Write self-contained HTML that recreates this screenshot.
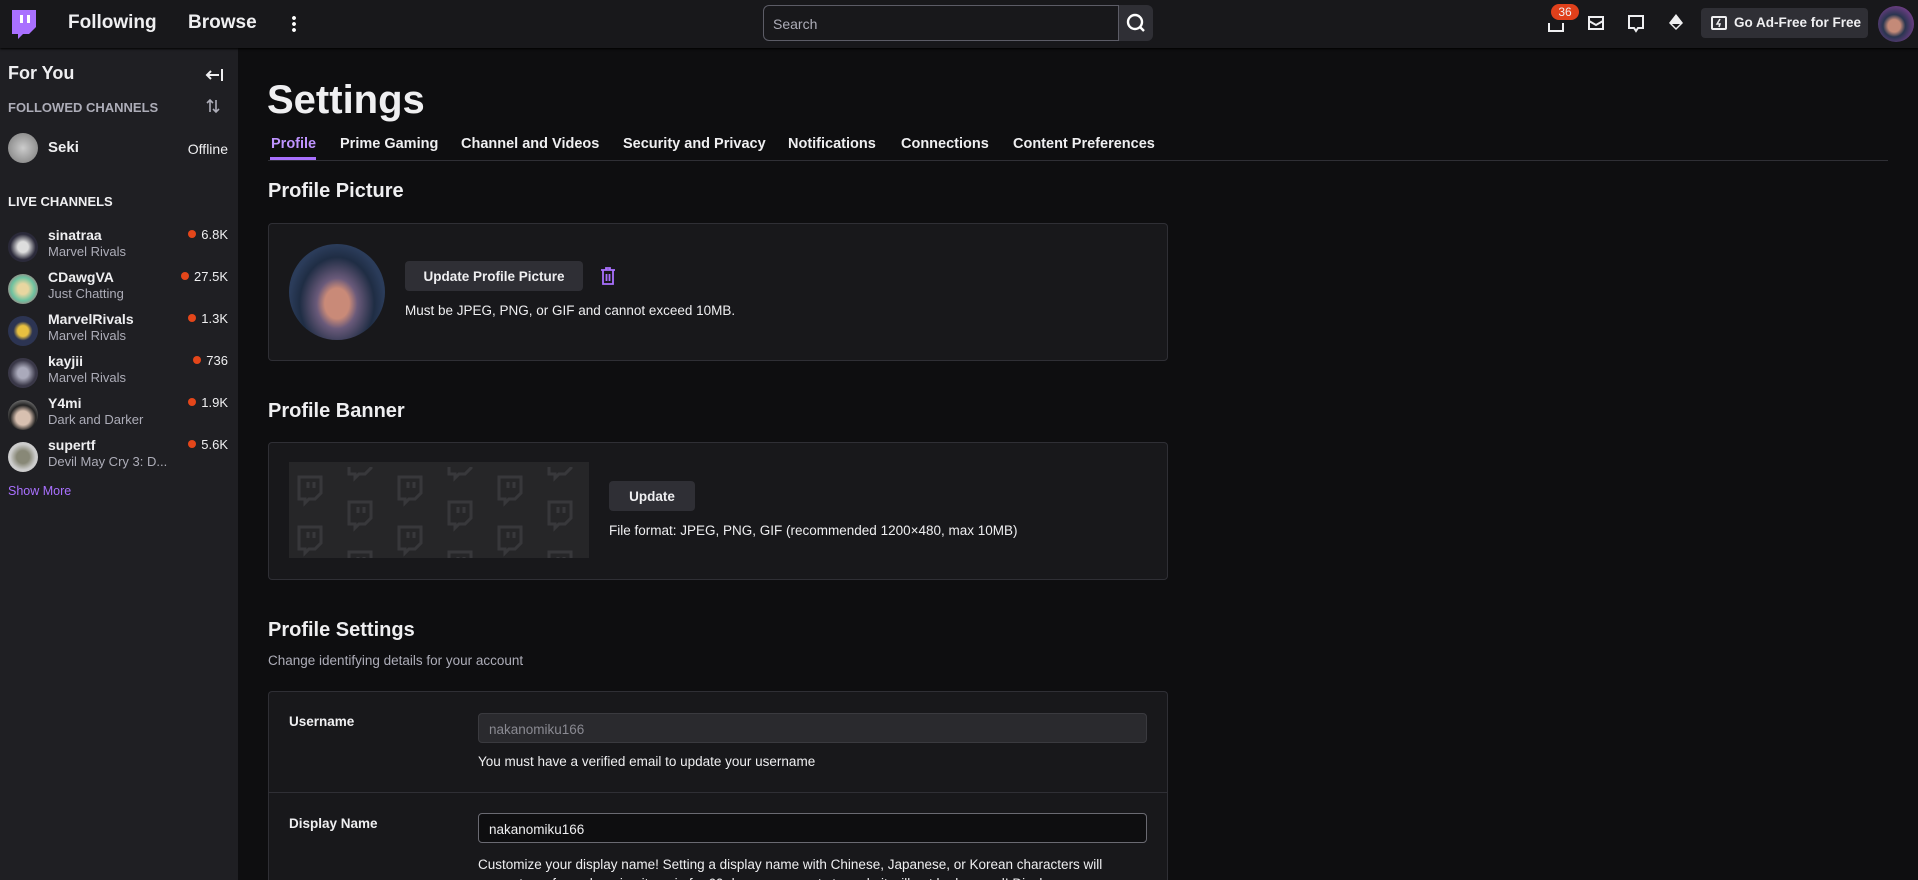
<!DOCTYPE html>
<html><head><meta charset="utf-8"><style>
*{box-sizing:border-box;margin:0;padding:0}
html,body{width:1918px;height:880px;overflow:hidden}
body{background:#0e0e10;font-family:"Liberation Sans",sans-serif;color:#efeff1;position:relative}
.abs{position:absolute}
#top{left:0;top:0;width:1918px;height:48px;background:#18181b;box-shadow:0 1px 2px #000;z-index:2}
.nav{font-size:19px;font-weight:bold;top:12px}
#side{left:0;top:48px;width:238px;height:832px;background:#1f1f23}
.row .av{position:absolute;left:8px;width:30px;height:30px;border-radius:50%}
.nm{position:absolute;left:48px;font-size:14px;font-weight:bold}
.gm{position:absolute;left:48px;font-size:13px;color:#adadb8;white-space:nowrap}
.vc{position:absolute;right:10px;font-size:13px;color:#efeff1}
.vc:before{content:"";display:inline-block;width:8px;height:8px;border-radius:50%;background:#e4461a;margin-right:5px;vertical-align:1px}
.tab{top:136px;font-size:14.5px;font-weight:bold}
h2{position:absolute;left:268px;font-size:20px;font-weight:bold}
.card{position:absolute;left:268px;width:900px;background:#18181b;border:1px solid #2f2f35;border-radius:4px}
.btn{position:absolute;background:#2f2f35;border-radius:4px;font-size:13.5px;font-weight:bold;display:flex;align-items:center;justify-content:center}
.t{position:absolute;font-size:13.5px}
.inp{position:absolute;left:478px;width:669px;height:30px;border-radius:4px;font-size:13.5px;padding:8px 10px}
</style></head><body>
<div id="top" class="abs">
 <svg class="abs" style="left:10px;top:10px" width="26" height="30" viewBox="0 0 26 30"><path d="M2 0H26V17L19 24H13L8 29V24H2Z" fill="#a970ff"/><rect x="10" y="5" width="3" height="8" fill="#fff"/><rect x="17" y="5" width="3" height="8" fill="#fff"/></svg>
 <div class="abs nav" style="left:68px">Following</div>
 <div class="abs nav" style="left:188px">Browse</div>
 <div class="abs" style="left:292px;top:15px;width:4px;height:18px;background:radial-gradient(circle,#fff 1.8px,transparent 2px) 0 0/4px 6px"></div>
 <div class="abs" style="left:763px;top:5px;width:356px;height:36px;border:1px solid #5c5c66;border-radius:6px 0 0 6px;background:#18181b;font-size:14px;color:#adadb8;padding:10px 9px">Search</div>
 <div class="abs" style="left:1119px;top:5px;width:34px;height:36px;background:#2f2f35;border-radius:0 6px 6px 0"><svg width="34" height="36"><circle cx="16" cy="17" r="7" stroke="#fff" stroke-width="2.4" fill="none"/><path d="M21 22l4 4" stroke="#fff" stroke-width="2.4"/></svg></div>
 <svg class="abs" style="left:1546px;top:14px" width="20" height="20"><path d="M3 9v8h14v-8" stroke="#efeff1" stroke-width="2" fill="none"/></svg>
 <div class="abs" style="left:1551px;top:4px;width:28px;height:16px;border-radius:8px;background:#e0401b;font-size:12px;text-align:center;line-height:16px">36</div>
 <svg class="abs" style="left:1586px;top:13px" width="20" height="20"><path d="M3 4h14v12H3zM3 8l7 4 7-4" stroke="#efeff1" stroke-width="2" fill="none"/></svg>
 <svg class="abs" style="left:1626px;top:13px" width="20" height="20"><path d="M3 3h14v12h-5l-2 3-2-3H3z" stroke="#efeff1" stroke-width="2" fill="none"/></svg>
 <svg class="abs" style="left:1666px;top:12px" width="20" height="20"><path d="M10 2l7 9-7 7-7-7z" fill="#efeff1"/><path d="M6 12h8l-4 4z" fill="#18181b"/></svg>
 <div class="abs" style="left:1701px;top:8px;width:167px;height:30px;background:#2f2f35;border-radius:4px;font-size:13.5px;font-weight:bold;padding:7px 0 0 33px;white-space:nowrap">Go Ad-Free for Free</div>
 <svg class="abs" style="left:1711px;top:16px" width="18" height="14"><rect x="1" y="1" width="14" height="12" rx="1" stroke="#efeff1" stroke-width="2" fill="none"/><path d="M9 3L6 8h3l-1 3" stroke="#efeff1" stroke-width="1.5" fill="none"/></svg>
 <div class="abs" style="left:1878px;top:6px;width:36px;height:36px;border-radius:50%;background:radial-gradient(circle at 45% 55%,#c48a78 0 22%,#2a3550 40%,#7a3f8e 80%,#1c2233)"></div>
</div>
<div id="side" class="abs">
 <div class="abs" style="left:8px;top:15px;font-size:18px;font-weight:bold">For You</div>
 <svg class="abs" style="left:204px;top:17px" width="20" height="20"><path d="M3 10h12M7 6l-4 4 4 4M18 4v12" stroke="#efeff1" stroke-width="2" fill="none"/></svg>
 <div class="abs" style="left:8px;top:52px;font-size:13px;font-weight:bold;color:#adadb8">FOLLOWED CHANNELS</div>
 <svg class="abs" style="left:204px;top:49px" width="18" height="18"><path d="M6 15V3M3 6l3-3 3 3M12 3v12M9 12l3 3 3-3" stroke="#adadb8" stroke-width="1.6" fill="none"/></svg>
 <div class="abs row" style="top:85px;width:238px;height:30px"><div class="av" style="background:radial-gradient(circle,#ccc,#777)"></div><div class="nm" style="top:6px;font-size:15px">Seki</div><div class="abs" style="right:10px;top:8px;font-size:14px">Offline</div></div>
 <div class="abs" style="left:8px;top:146px;font-size:13px;font-weight:bold">LIVE CHANNELS</div>
 <div class="abs row" style="top:179px;width:238px"><div class="av" style="top:5px;background:radial-gradient(circle,#ddd 0 25%,#2b2a3a 60%)"></div><div class="nm" style="top:0">sinatraa</div><div class="gm" style="top:17px">Marvel Rivals</div><div class="vc" style="top:0">6.8K</div></div>
 <div class="abs row" style="top:221px;width:238px"><div class="av" style="top:5px;background:radial-gradient(circle,#e8d6a0 0 25%,#6cc2a0 55%,#d04060)"></div><div class="nm" style="top:0">CDawgVA</div><div class="gm" style="top:17px">Just Chatting</div><div class="vc" style="top:0">27.5K</div></div>
 <div class="abs row" style="top:263px;width:238px"><div class="av" style="top:5px;background:radial-gradient(circle,#e8c040 0 25%,#2c3452 45%)"></div><div class="nm" style="top:0">MarvelRivals</div><div class="gm" style="top:17px">Marvel Rivals</div><div class="vc" style="top:0">1.3K</div></div>
 <div class="abs row" style="top:305px;width:238px"><div class="av" style="top:5px;background:radial-gradient(circle,#aab 0 25%,#3a3848 60%)"></div><div class="nm" style="top:0">kayjii</div><div class="gm" style="top:17px">Marvel Rivals</div><div class="vc" style="top:0">736</div></div>
 <div class="abs row" style="top:347px;width:238px"><div class="av" style="top:5px;background:radial-gradient(circle at 50% 60%,#d8c0b0 0 30%,#222 55%,#bbb)"></div><div class="nm" style="top:0">Y4mi</div><div class="gm" style="top:17px">Dark and Darker</div><div class="vc" style="top:0">1.9K</div></div>
 <div class="abs row" style="top:389px;width:238px"><div class="av" style="top:5px;background:radial-gradient(circle,#887 0 30%,#ccc 60%)"></div><div class="nm" style="top:0">supertf</div><div class="gm" style="top:17px">Devil May Cry 3: D...</div><div class="vc" style="top:0">5.6K</div></div>
 <div class="abs" style="left:8px;top:436px;font-size:12.5px;color:#a970ff">Show More</div>
</div>

<div class="abs" style="left:267px;top:78px;font-size:40px;font-weight:bold">Settings</div>
<div class="abs" style="left:268px;top:160px;width:1620px;height:1px;background:#2f2f35"></div>
<div class="abs" style="left:270px;top:157px;width:46px;height:3px;background:#a970ff"></div>
<div class="abs tab" style="left:271px;color:#bf94ff">Profile</div>
<div class="abs tab" style="left:340px">Prime Gaming</div>
<div class="abs tab" style="left:461px">Channel and Videos</div>
<div class="abs tab" style="left:623px">Security and Privacy</div>
<div class="abs tab" style="left:788px">Notifications</div>
<div class="abs tab" style="left:901px">Connections</div>
<div class="abs tab" style="left:1013px">Content Preferences</div>

<h2 style="top:180px">Profile Picture</h2>
<div class="card" style="top:223px;height:138px"></div>
<div class="abs" style="left:289px;top:244px;width:96px;height:96px;border-radius:50%;background:radial-gradient(ellipse at 50% 62%,#c98a78 0 18%,#6a5a7a 30%,#1f2d44 55%,#2b3c5a 70%),linear-gradient(90deg,#38a8c0,#1b2a44 40%,#b54aa8)"></div>
<div class="btn" style="left:405px;top:261px;width:178px;height:30px">Update Profile Picture</div>
<svg class="abs" style="left:599px;top:266px" width="18" height="20"><path d="M2 4h14M7 4V2h4v2M4 4v14h10V4M7.5 8v7M10.5 8v7" stroke="#a970ff" stroke-width="1.8" fill="none"/></svg>
<div class="t" style="left:405px;top:303px">Must be JPEG, PNG, or GIF and cannot exceed 10MB.</div>

<h2 style="top:400px">Profile Banner</h2>
<div class="card" style="top:442px;height:138px"></div>
<div class="abs" style="left:289px;top:462px;width:300px;height:96px;background-color:#262628;overflow:hidden">
<svg width="300" height="96"><defs><pattern id="p" width="100" height="50" patternUnits="userSpaceOnUse"><g fill="none" stroke="#38383b" stroke-width="3"><path d="M10 10h22v16l-6 6h-6l-4 4v-4h-6z M19 15v6M25 15v6"/><path d="M60 35h22v16l-6 6h-6l-4 4v-4h-6z M69 40v6M75 40v6"/><path d="M60 -15h22v16l-6 6h-6l-4 4v-4h-6z"/></g></pattern></defs><rect width="300" height="96" fill="url(#p)" transform="translate(0,5)"/></svg></div>
<div class="btn" style="left:609px;top:481px;width:86px;height:30px">Update</div>
<div class="t" style="left:609px;top:523px">File format: JPEG, PNG, GIF (recommended 1200×480, max 10MB)</div>

<h2 style="top:619px">Profile Settings</h2>
<div class="t" style="left:268px;top:653px;color:#adadb8">Change identifying details for your account</div>
<div class="card" style="top:691px;height:189px;overflow:hidden;border-bottom:none;border-radius:4px 4px 0 0">
 <div class="abs" style="left:0;top:100px;width:898px;height:1px;background:#2f2f35"></div>
 <div class="t" style="left:20px;top:22px;font-weight:bold">Username</div>
 <div class="inp" style="left:209px;top:21px;background:#2a2a2e;border:1px solid #3a3a3f;color:#8a8a92">nakanomiku166</div>
 <div class="t" style="left:209px;top:62px">You must have a verified email to update your username</div>
 <div class="t" style="left:20px;top:124px;font-weight:bold">Display Name</div>
 <div class="inp" style="left:209px;top:121px;background:#0e0e10;border:1px solid #6a6a72">nakanomiku166</div>
 <div class="t" style="left:209px;top:163px;line-height:19px;width:670px">Customize your display name! Setting a display name with Chinese, Japanese, or Korean characters will prevent you from changing it again for 60 days — requests to undo it will not be honored! Display names</div>
</div>
</body></html>
